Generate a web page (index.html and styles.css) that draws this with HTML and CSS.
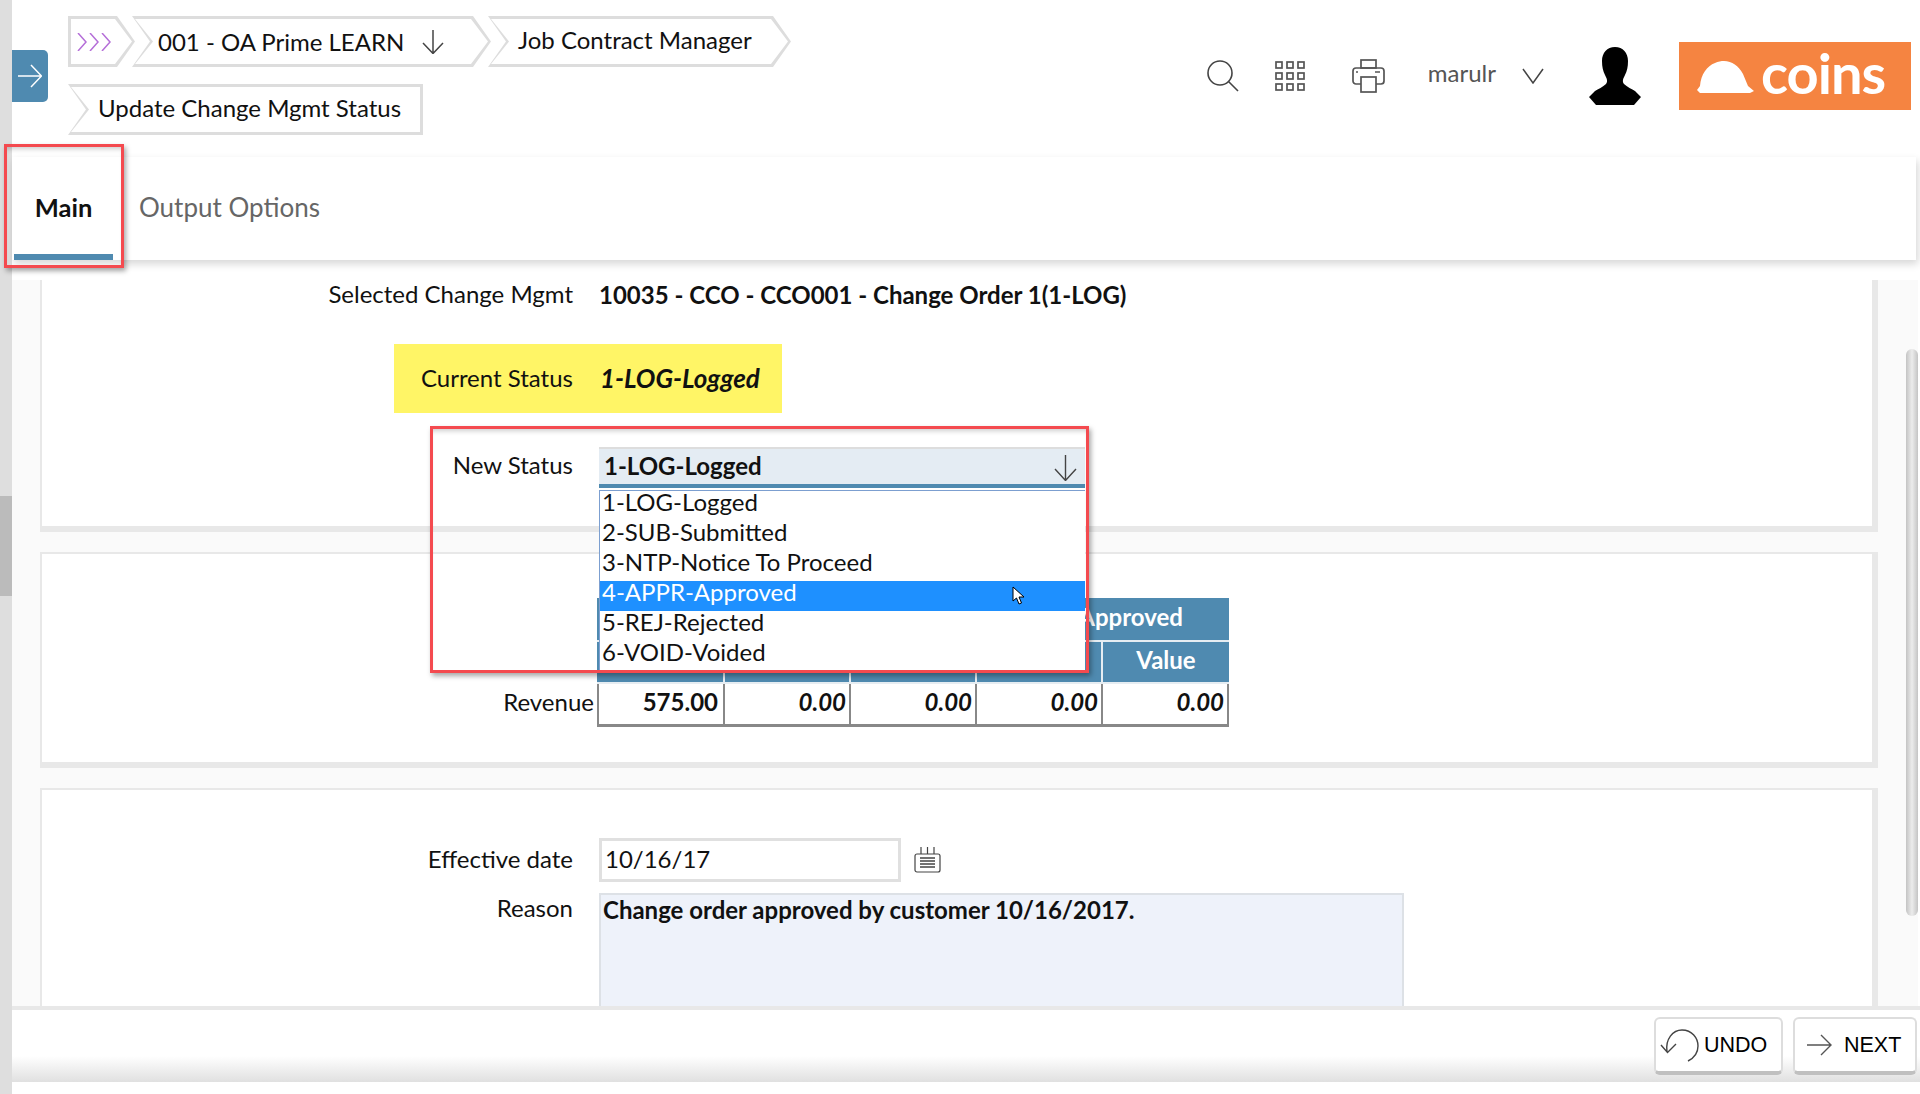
FILE: index.html
```html
<!DOCTYPE html>
<html lang="en">
<head>
  <meta charset="UTF-8">
  <title>Update Change Mgmt Status</title>
  <link rel="stylesheet" href="styles.css">
</head>
<body>
  <div class="strip"><div class="strip-thumb"></div></div>
  <div class="page">
    <header class="header">
      <div class="nav-toggle">
        <svg width="24" height="24" viewBox="0 0 24 24" fill="none" stroke="#fff" stroke-width="1.5"><path d="M0 12H23M13 1L23.500 12L13 23"/></svg>
      </div>
      <nav class="crumbs">
        <div class="crumb crumb-first">
          <svg width="34" height="18" viewBox="0 0 34 18" fill="none" stroke="#b56fd8" stroke-width="1.5"><path d="M1 0L9 9L1 18M13 0L21 9L13 18M25 0L33 9L25 18"/></svg>
        </div>
        <div class="crumb crumb-job">
          <span>001 - OA Prime LEARN</span>
          <svg width="22" height="24" viewBox="0 0 22 24" fill="none" stroke="#444" stroke-width="1.5"><path d="M11 0V23M1 13L11 23.500L21 13"/></svg>
        </div>
        <div class="crumb crumb-module"><span>Job Contract Manager</span></div>
        <div class="crumb crumb-last"><span>Update Change Mgmt Status</span></div>
      </nav>
      <div class="tools">
        <svg class="tool-search" width="32" height="32" viewBox="0 0 32 32" fill="none" stroke="#444" stroke-width="1.6"><circle cx="13" cy="13" r="12"/><path d="M21.500 21.500L31 31"/></svg>
        <svg class="tool-grid" width="30" height="30" viewBox="0 0 30 30" fill="none" stroke="#555" stroke-width="1.7">
          <rect x="1" y="1" width="6" height="6"/><rect x="12" y="1" width="6" height="6"/><rect x="23" y="1" width="6" height="6"/>
          <rect x="1" y="12" width="6" height="6"/><rect x="12" y="12" width="6" height="6"/><rect x="23" y="12" width="6" height="6"/>
          <rect x="1" y="23" width="6" height="6"/><rect x="12" y="23" width="6" height="6"/><rect x="23" y="23" width="6" height="6"/>
        </svg>
        <svg class="tool-print" width="33" height="34" viewBox="0 0 33 34" fill="none" stroke="#555" stroke-width="1.7">
          <rect x="9" y="1" width="15" height="8"/>
          <rect x="1" y="9" width="31" height="16" rx="3"/>
          <rect x="9" y="18" width="15" height="15" fill="#fff"/>
          <path d="M4 13H6M23 13H28"/>
        </svg>
        <span class="user">marulr</span>
        <svg class="tool-chevron" width="22" height="16" viewBox="0 0 22 16" fill="none" stroke="#444" stroke-width="1.5"><path d="M1 1L11 15L21 1"/></svg>
        <svg class="avatar" width="52" height="58" viewBox="0 0 52 58"><path d="M26 0C34 0 39 6 39 14C39 20 38 24 36 28C34 32 33 34 35 37C38 40 43 42 46 44L52 50L45 58H7L0 50L6 44C9 42 14 40 17 37C19 34 18 32 16 28C14 24 13 20 13 14C13 6 18 0 26 0Z"/></svg>
        <div class="logo">
          <svg width="57" height="33" viewBox="0 0 57 33" fill="#fff"><path d="M0 30L3 26C4 14 10 6 18 3C30 -2 40 3 46 14L51 26L57 31L53 33H3Z"/></svg>
          <span>coins</span>
        </div>
      </div>
    </header>

    <div class="tabs">
      <div class="tab tab-active">Main</div>
      <div class="tab">Output Options</div>
    </div>

    <main class="content">
      <div class="scroller">
        <section class="panel panel-status">
          <div class="row row-selected">
            <label class="label">Selected Change Mgmt</label>
            <div class="value-strong">10035 - CCO - CCO001 - Change Order 1(1-LOG)</div>
          </div>
          <div class="row row-current">
            <label class="label">Current Status</label>
            <div class="value-status">1-LOG-Logged</div>
          </div>
          <div class="row row-new">
            <label class="label">New Status</label>
            <div class="select">
              <span>1-LOG-Logged</span>
              <svg width="23" height="26" viewBox="0 0 23 26" fill="none" stroke="#444" stroke-width="1.4"><path d="M11.500 0V25M1 14L11.500 25.500L22 14"/></svg>
              <ul class="select-list">
                <li>1-LOG-Logged</li>
                <li>2-SUB-Submitted</li>
                <li>3-NTP-Notice To Proceed</li>
                <li class="is-hover">4-APPR-Approved
                  <svg class="cursor" width="14" height="19" viewBox="0 0 14 19"><path d="M1 1V15L4.500 12L7 18L9.500 17L7 11H12Z" fill="#fff" stroke="#000"/></svg>
                </li>
                <li>5-REJ-Rejected</li>
                <li>6-VOID-Voided</li>
              </ul>
            </div>
          </div>
        </section>

        <section class="panel panel-amounts">
          <table class="amounts">
            <tr class="head-top">
              <td class="rev-label"></td>
              <th colspan="5" class="head-approved">Approved</th>
            </tr>
            <tr class="head-sub">
              <td class="rev-label"></td>
              <th></th><th></th><th></th><th></th><th>Value</th>
            </tr>
            <tr class="data">
              <td class="rev-label">Revenue</td>
              <td class="num-first">575.00</td>
              <td class="num">0.00</td>
              <td class="num">0.00</td>
              <td class="num">0.00</td>
              <td class="num">0.00</td>
            </tr>
          </table>
        </section>

        <section class="panel panel-reason">
          <div class="row row-date">
            <label class="label">Effective date</label>
            <div class="date-input">10/16/17</div>
            <svg class="calendar" width="27" height="26" viewBox="0 0 27 26" fill="none" stroke="#444" stroke-width="1.2">
              <rect x="1" y="7" width="25" height="18" rx="2"/>
              <path d="M7 0V7M13.500 0V7M20 0V7"/>
              <path d="M6 11H21M6 14H21M6 17H21M6 20H21" stroke-width="1.4"/>
            </svg>
          </div>
          <div class="row row-reason">
            <label class="label">Reason</label>
            <div class="reason-box">Change order approved by customer 10/16/2017.</div>
          </div>
        </section>

        <div class="scroll-thumb"></div>
        <div class="callout callout-status"></div>
      </div>
    </main>

    <footer class="footer">
      <button class="btn btn-undo">
        <svg width="40" height="33" viewBox="0 0 40 33" fill="none" stroke="#444" stroke-width="1.4"><path d="M7 23C5 10 13 1 22 1C32 1 38 9 38 17C38 24 34 29 28 32M1 16L7.500 23.500L16 15"/></svg>
        <span>UNDO</span>
      </button>
      <button class="btn btn-next">
        <svg width="25" height="22" viewBox="0 0 25 22" fill="none" stroke="#555" stroke-width="1.4"><path d="M0 11H24M14 1L24 11L14 21"/></svg>
        <span>NEXT</span>
      </button>
    </footer>
  </div>
</body>
</html>
```

FILE: styles.css
```css
* {
  box-sizing: border-box;
}
body {
  margin: 0;
  height: 1094px;
  display: flex;
  overflow: hidden;
  font-family: Lato, "Open Sans", sans-serif;
  font-size: 24px;
  color: #111;
  background: #fff;
}

/* left edge */
.strip {
  width: 12px;
  flex: none;
  background: #dedede;
  padding-top: 496px;
}
.strip-thumb {
  height: 100px;
  background: #bbb;
}
.page {
  flex: 1;
  min-width: 0;
  display: flex;
  flex-direction: column;
}

/* header */
.header {
  height: 157px;
  flex: none;
  display: flex;
  align-items: flex-start;
}
.nav-toggle {
  width: 36px;
  height: 52px;
  margin-top: 50px;
  display: flex;
  align-items: center;
  justify-content: center;
  background: #4f8ab0;
  border-radius: 0 5px 5px 0;
}
.crumbs {
  width: 740px;
  margin: 16px 0 0 20px;
  display: flex;
  flex-wrap: wrap;
  row-gap: 17px;
}
.crumb {
  position: relative;
  height: 51px;
  display: flex;
  align-items: center;
  background: #ddd;
  margin-right: -3px;
  clip-path: polygon(0 0, calc(100% - 18px) 0, 100% 50%, calc(100% - 18px) 100%, 0 100%, 18px 50%);
}
.crumb::before {
  content: "";
  position: absolute;
  inset: 0;
  background: #fff;
  clip-path: polygon(3px 3px, calc(100% - 20px) 3px, calc(100% - 3px) 50%, calc(100% - 20px) calc(100% - 3px), 3px calc(100% - 3px), 21px 50%);
}
.crumb > * {
  position: relative;
}
.crumb-first {
  width: 67px;
  padding-left: 9px;
  clip-path: polygon(0 0, calc(100% - 18px) 0, 100% 50%, calc(100% - 18px) 100%, 0 100%);
}
.crumb-first::before {
  clip-path: polygon(3px 3px, calc(100% - 20px) 3px, calc(100% - 3px) 50%, calc(100% - 20px) calc(100% - 3px), 3px calc(100% - 3px));
}
.crumb-job {
  width: 359px;
  padding-left: 26px;
  gap: 18px;
}
.crumb-module {
  width: 303px;
  padding: 0 0 4px 30px;
}
.crumb-last {
  width: 355px;
  padding: 0 0 4px 30px;
  clip-path: polygon(0 0, 100% 0, 100% 100%, 0 100%, 18px 50%);
}
.crumb-last::before {
  clip-path: polygon(3px 3px, calc(100% - 3px) 3px, calc(100% - 3px) calc(100% - 3px), 3px calc(100% - 3px), 21px 50%);
}
.tools {
  margin: 42px 9px 0 auto;
  height: 68px;
  display: flex;
  align-items: center;
}
.tool-grid {
  margin-left: 36px;
}
.tool-print {
  margin-left: 47px;
}
.user {
  margin: 0 0 7px 43px;
  color: #555;
}
.tool-chevron {
  margin-left: 26px;
}
.avatar {
  margin-left: 45px;
}
.logo {
  width: 232px;
  height: 68px;
  margin-left: 38px;
  padding-left: 18px;
  display: flex;
  align-items: center;
  gap: 7px;
  background: #f58441;
  color: #fff;
  font-size: 56px;
  font-weight: 700;
  letter-spacing: -1px;
  line-height: 1;
}
.logo span {
  margin-top: -7px;
}

/* tabs */
.tabs {
  position: relative;
  z-index: 2;
  height: 103px;
  flex: none;
  margin-right: 4px;
  display: flex;
  background: #fff;
  box-shadow: 2px 4px 8px rgba(0, 0, 0, .16);
}
.tab {
  line-height: 100px;
  font-size: 26px;
  color: #666;
  margin-left: 26px;
}
.tab-active {
  position: relative;
  width: 99px;
  height: 103px;
  margin: 0 0 0 2px;
  text-align: center;
  color: #111;
  font-weight: 700;
  font-size: 25.500px;
  border-bottom: 6px solid #4f8ab0;
}
.tab-active::after {
  content: "";
  position: absolute;
  left: -10px;
  right: -11px;
  top: -13px;
  bottom: -14px;
  border: 3px solid #f44a4f;
  box-shadow: 2px 3px 5px rgba(0, 0, 0, .35), inset 0 5px 5px -3px rgba(0, 0, 0, .2);
}

/* content */
.content {
  flex: 1;
  min-height: 0;
  padding-top: 20px;
  display: flex;
}
.scroller {
  position: relative;
  flex: 1;
  margin-right: 2px;
  padding: 0 28px 0 28px;
  display: flex;
  flex-direction: column;
  gap: 20px;
  overflow: hidden;
  background: #fafafa;
}
.panel {
  flex: none;
  width: 1838px;
  background: #fff;
  border-left: 2px solid #e8e8e8;
  border-right: 6px solid #e8e8e8;
  border-bottom: 6px solid #e8e8e8;
}
.panel-status {
  height: 252px;
  position: relative;
  z-index: 1;
}
.panel-amounts {
  height: 216px;
  border-top: 2px solid #e8e8e8;
  padding-top: 44px;
}
.panel-reason {
  height: 400px;
  border-top: 2px solid #e8e8e8;
  padding-top: 48px;
}
.row {
  display: flex;
  align-items: center;
}
.label {
  width: 531px;
  margin-right: 26px;
  text-align: right;
  flex: none;
}
.row-selected {
  height: 28px;
}
.row-selected .label {
  padding-bottom: 2px;
}
.value-strong {
  font-weight: 700;
}
.row-current {
  width: 388px;
  height: 69px;
  margin: 36px 0 0 352px;
  padding-bottom: 2px;
  background: #fff566;
}
.row-current .label {
  width: 179px;
}
.value-status {
  font-size: 26px;
  font-weight: 700;
  font-style: italic;
  margin-left: 1px;
}
.row-new {
  margin-top: 34px;
  align-items: flex-start;
}
.row-new .label {
  padding-top: 3px;
}
.select {
  position: relative;
  width: 486px;
  height: 41px;
  display: flex;
  justify-content: space-between;
  padding: 0 8px 0 5px;
  line-height: 33px;
  font-weight: 700;
  background: #e4ecf3;
  border-top: 2px solid #ddd;
  border-bottom: 4px solid #4f8ab0;
}
.select svg {
  margin-top: 6px;
  flex: none;
}
.select-list {
  position: absolute;
  left: 0;
  top: 41px;
  width: 486px;
  height: 183px;
  margin: 0;
  padding: 0;
  list-style: none;
  font-weight: 400;
  background: #fff;
  border: 1px solid #7c9fd0;
  border-right: 0;
  border-bottom: 0;
}
.select-list li {
  position: relative;
  height: 30px;
  line-height: 22px;
  padding-left: 2px;
}
.select-list .is-hover {
  background: #1e90ff;
  color: #fff;
}
.select-list .cursor {
  position: absolute;
  left: 412px;
  top: 5px;
  margin: 0;
}

/* amounts table */
.amounts {
  border-collapse: separate;
  border-spacing: 0;
}
.amounts th {
  width: 126px;
  height: 42px;
  padding: 0 0 5px;
  font-weight: 700;
  color: #fff;
  background: #4f8ab0;
  border-right: 2px solid #e6edf2;
  border-bottom: 2px solid #e6edf2;
}
.amounts th:last-child {
  border-right: 0;
}
.head-sub th:nth-child(2) {
  width: 128px;
}
.head-top th {
  height: 44px;
}
.amounts .head-approved {
  padding-right: 46px;
  text-align: right;
}
.rev-label {
  width: 555px;
  padding: 0 3px 8px 0;
  text-align: right;
}
.data td {
  height: 43px;
}
.num-first,
.num {
  width: 126px;
  padding: 0 5px 5px 0;
  text-align: right;
  font-weight: 700;
  border-right: 2px solid #888;
  border-bottom: 3px solid #888;
}
.num-first {
  width: 128px;
  border-left: 2px solid #888;
}
.num {
  padding-right: 3px;
  font-style: italic;
}

/* date and reason */
.row-date {
  height: 44px;
}
.row-date .label {
  padding-bottom: 4px;
}
.date-input {
  width: 302px;
  height: 44px;
  padding-left: 3px;
  line-height: 35px;
  border: 3px solid #e0e0e0;
}
.calendar {
  margin: 0 0 0 13px;
}
.row-reason {
  margin-top: 11px;
  align-items: flex-start;
}
.reason-box {
  width: 805px;
  height: 200px;
  padding: 0 2px;
  font-weight: 700;
  background: #eef2fa;
  border: 2px solid #dde1e6;
}

/* scroll bar */
.scroll-thumb {
  position: absolute;
  right: 0;
  top: 69px;
  width: 12px;
  height: 567px;
  border-radius: 6px;
  background: linear-gradient(90deg, #c4c4c4, #ececec 50%, #c4c4c4);
}

/* annotation */
.callout-status {
  position: absolute;
  z-index: 3;
  left: 418px;
  top: 146px;
  width: 659px;
  height: 247px;
  border: 3px solid #f44a4f;
  box-shadow: 2px 3px 5px rgba(0, 0, 0, .35), inset 0 5px 5px -3px rgba(0, 0, 0, .2);
}

/* footer */
.footer {
  height: 76px;
  flex: none;
  margin-bottom: 12px;
  padding: 7px 3px 0 0;
  display: flex;
  justify-content: flex-end;
  gap: 10px;
  border-top: 4px solid #e8e8e8;
  background: linear-gradient(#fff 64%, #e0e0e0);
}
.btn {
  height: 58px;
  padding: 0;
  display: flex;
  align-items: center;
  font-family: "Liberation Sans", Arial, sans-serif;
  font-size: 21.500px;
  color: #000;
  background: #fff;
  border: 2px solid #ddd;
  border-bottom: 4px solid #c0c0c0;
  border-radius: 6px;
}
.btn-undo {
  width: 129px;
  padding-left: 4px;
  gap: 4px;
}
.btn-next {
  width: 124px;
  padding-left: 12px;
  gap: 12px;
}
```
